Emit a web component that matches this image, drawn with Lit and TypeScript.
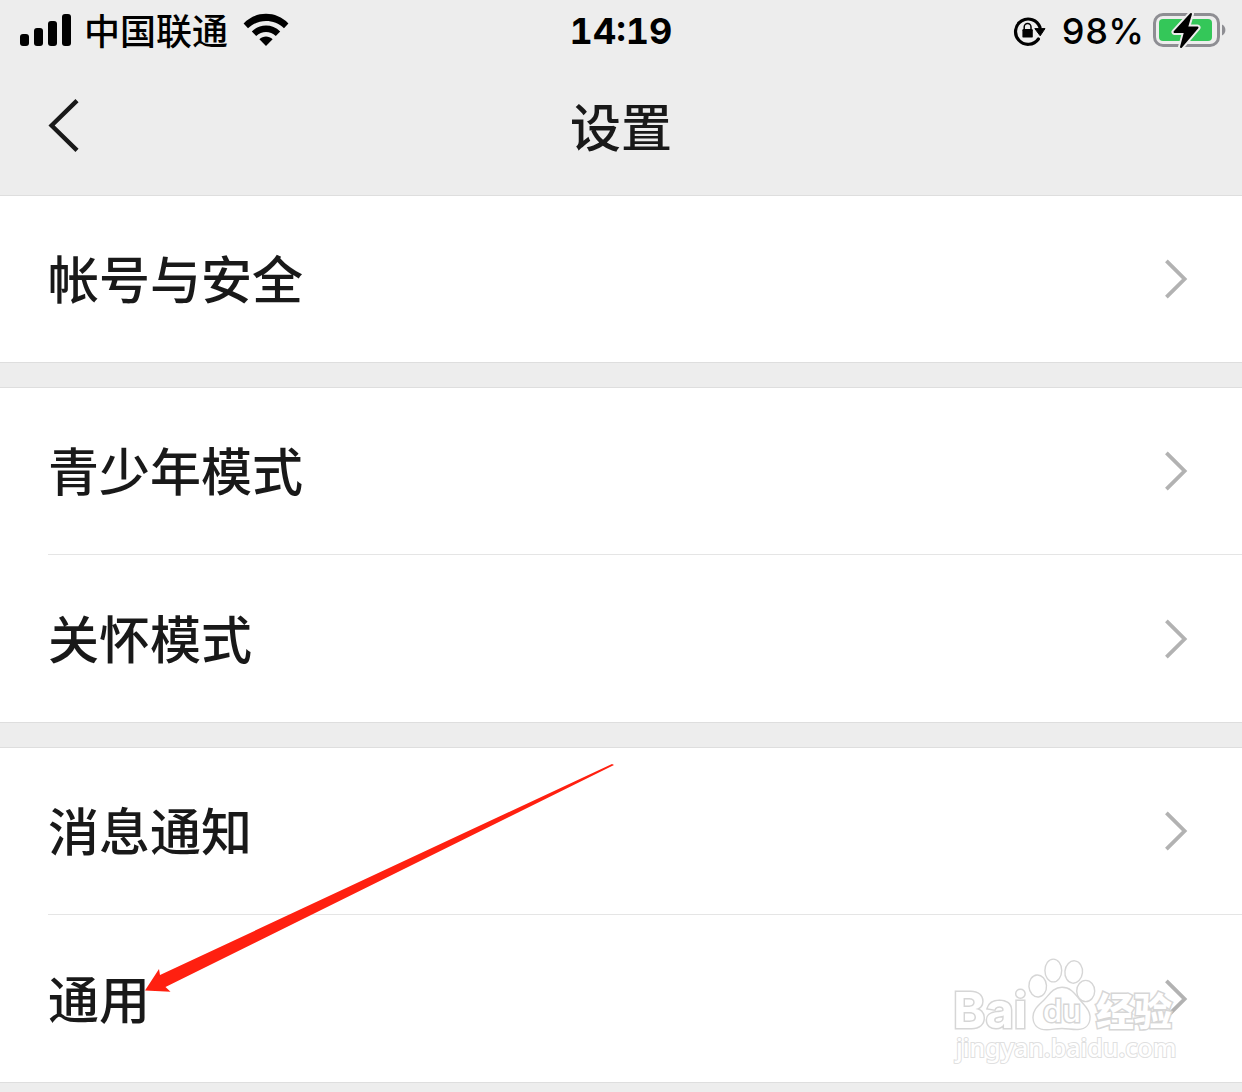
import { LitElement, html, css, svg } from "lit";
import { customElement, property } from "lit/decorators.js";

@customElement("status-bar")
class StatusBar extends LitElement {
  static styles = css`
    :host {
      display: grid;
      grid-template-columns: 1fr auto 1fr;
      align-items: center;
      height: 62px;
      padding: 0 16px;
      color: #000;
      font-size: 36px;
      line-height: 40px;
    }
    .side {
      display: flex;
      align-items: center;
    }
    .left {
      padding: 0 0 2px 4px;
    }
    .right {
      justify-content: flex-end;
    }
    .carrier {
      margin: 0 15px 0 12px;
      padding-bottom: 2px;
      font-family: "Noto Sans CJK SC", sans-serif;
      font-weight: 500;
    }
    .time {
      font-family: Inter, sans-serif;
      font-weight: 700;
      font-variant-numeric: tabular-nums;
    }
    .percent {
      margin: 0 8px 0 16px;
      font-family: Inter, sans-serif;
      font-weight: 500;
      font-variant-numeric: tabular-nums;
    }
    svg {
      display: block;
      flex: none;
    }
  `;

  render() {
    return html`
      <div class="side left">
        <svg width="52" height="34" viewBox="0 0 52 34" aria-hidden="true">
          <rect x="0" y="21" width="9" height="12" rx="3" />
          <rect x="14" y="15" width="9" height="18" rx="3" />
          <rect x="28" y="8" width="9" height="25" rx="3" />
          <rect x="42" y="1" width="9" height="32" rx="3" />
        </svg>
        <span class="carrier">中国联通</span>
        <svg width="46" height="34" viewBox="0 0 46 34" aria-hidden="true">
          <path d="M0.6 10.4C13 -2.4 33 -2.4 45.4 10.4L41 15.3C31 5.6 15 5.6 5 15.3Z" />
          <path d="M8.8 18.4C16.8 10.6 29.2 10.6 37.2 18.4L32.8 23C27.2 17.8 18.8 17.8 13.2 23Z" />
          <path d="M16.4 26.2C20.2 22.6 25.8 22.6 29.6 26.2L23 33Z" />
        </svg>
      </div>
      <span class="time">14:19</span>
      <div class="side right">
        <svg width="33" height="30" viewBox="0 0 33 30" aria-hidden="true">
          <path
            d="M25.4 23A12.6 12.6 0 1 1 27 11.4"
            fill="none"
            stroke="#000"
            stroke-width="3.2"
            stroke-linecap="round"
          />
          <path d="M21.8 12.6H32L27.2 19.8Z" stroke="#000" stroke-linejoin="round" />
          <rect x="9.4" y="13" width="10.4" height="8.600" rx="1.2" />
          <path d="M11.2 13V11a3.400 3.600 0 0 1 6.800 0v2" fill="none" stroke="#000" stroke-width="1.500" />
        </svg>
        <span class="percent">98%</span>
        <svg width="74" height="38" viewBox="0 0 74 38" aria-hidden="true">
          <rect x="2.5" y="2.5" width="64" height="31" rx="8.5" fill="none" stroke="#8e8e93" stroke-width="3" />
          <path d="M70 12.5C74.5 14.5 74.5 21.5 70 23.5Z" fill="#8e8e93" />
          <rect x="7" y="7" width="53" height="22" rx="4" fill="#34c759" />
          <path
            d="M39 2L22.500 20H33.200L29 35L45.500 15.500H35Z"
            fill="#ededed"
            stroke="#ededed"
            stroke-width="6"
            stroke-linejoin="round"
          />
          <path
            d="M39 2L22.500 20H33L29 35L45.500 15.500H35Z"
            stroke="#000"
            stroke-width="2"
            stroke-linejoin="round"
          />
        </svg>
      </div>
    `;
  }
}

@customElement("nav-header")
class NavHeader extends LitElement {
  @property() heading = "";

  static styles = css`
    :host {
      display: grid;
      grid-template-columns: 1fr auto 1fr;
      align-items: center;
      height: 133px;
      color: #191919;
    }
    .back {
      justify-self: start;
      padding: 8px 24px 16px 46px;
      border: 0;
      background: none;
      color: inherit;
      cursor: pointer;
    }
    svg {
      display: block;
    }
    .title {
      margin: 0 0 8px;
      font-size: 51px;
      font-weight: 500;
      line-height: 76px;
    }
  `;

  render() {
    return html`
      <button class="back" aria-label="返回">
        <svg width="36" height="56" viewBox="0 0 36 56" aria-hidden="true">
          <path
            d="M31 3.6L5.600 28.5L31 53.4"
            fill="none"
            stroke="currentColor"
            stroke-width="4.4"
          />
        </svg>
      </button>
      <h1 class="title">${this.heading}</h1>
    `;
  }
}

@customElement("settings-group")
class SettingsGroup extends LitElement {
  @property({ attribute: false }) items: string[] = [];

  static styles = css`
    :host {
      display: block;
      border-bottom: 1px solid #dedede;
      background: #fff;
    }
    .list {
      margin: 0;
      padding: 0;
      list-style: none;
    }
    .item {
      box-sizing: border-box;
      height: 168px;
      margin-left: 48px;
      border-top: 1px solid #e5e5e5;
    }
    .item:first-child {
      height: 167px;
      margin-left: 0;
      padding-left: 48px;
      border-color: #dedede;
    }
    .link {
      display: flex;
      align-items: center;
      justify-content: space-between;
      height: 100%;
      padding-right: 54px;
      color: #191919;
      font-size: 51px;
      font-weight: 500;
      line-height: 76px;
      text-decoration: none;
    }
    .label {
      padding-bottom: 4px;
    }
    svg {
      display: block;
      flex: none;
    }
  `;

  render() {
    return html`
      <ul class="list">
        ${this.items.map(
          (item) => html`
            <li class="item">
              <a class="link" href="#">
                <span class="label">${item}</span>
                <svg width="24" height="40" viewBox="0 0 24 40" aria-hidden="true">
                  <path d="M2.4 1.8L20.6 20L2.4 38.2" fill="none" stroke="#b2b2b2" stroke-width="3.8" />
                </svg>
              </a>
            </li>
          `
        )}
      </ul>
    `;
  }
}

@customElement("baidu-watermark")
class BaiduWatermark extends LitElement {
  static styles = css`
    :host {
      display: block;
      pointer-events: none;
    }
    svg {
      display: block;
    }
    .outline {
      fill: #fff;
      stroke: #d6d6d6;
      stroke-width: 1.4;
    }
    .word {
      fill: #fff;
      stroke: #d6d6d6;
      stroke-width: 3;
      paint-order: stroke;
      font-family: Inter, sans-serif;
      font-weight: 700;
    }
    .paw {
      font-weight: 500;
    }
    .cjk {
      font-family: "Noto Sans CJK SC", sans-serif;
      font-weight: 900;
    }
    .address {
      stroke: #e0e0e0;
      stroke-width: 2;
      font-family: "Noto Sans", sans-serif;
      font-weight: 500;
    }
  `;

  render() {
    return html`
      <svg width="230" height="112" viewBox="0 0 230 112" role="img" aria-label="Baidu 经验">
        ${svg`
          <text class="word" x="1" y="72" font-size="49">Bai</text>
          <ellipse class="outline" cx="85.7" cy="30" rx="8.8" ry="11" transform="rotate(-4 85.7 30)" />
          <ellipse class="outline" cx="101.3" cy="14.5" rx="8.4" ry="11.4" />
          <ellipse class="outline" cx="121.7" cy="16" rx="8.8" ry="11.2" transform="rotate(6 121.7 16)" />
          <ellipse class="outline" cx="133.7" cy="35" rx="9" ry="10.6" />
          <path class="outline" d="M110 31.3C101 31.3 97 39 92 44C86 50 80.500 54 81 62C81.500 70 87 74 95 73.800C101 73.500 104 72.500 110 72.500C116 72.500 120 73.800 126 73.500C134 73 138.500 68 138 60C137.500 53 132 49 128 44C123 38 119 31.300 110 31.300Z" />
          <text class="word paw" x="91" y="66" font-size="31">du</text>
          <text class="word cjk" x="144" y="69" font-size="38">经验</text>
          <text class="word address" x="4" y="101" font-size="25">jingyan.baidu.com</text>
        `}
      </svg>
    `;
  }
}

@customElement("app-root")
class AppRoot extends LitElement {
  static styles = css`
    :host {
      display: block;
      position: relative;
      min-height: 100vh;
      overflow: hidden;
      background: #ededed;
      font-family: "Noto Sans CJK SC", sans-serif;
    }
    .groups {
      display: flex;
      flex-direction: column;
      gap: 24px;
      position: relative;
    }
    .arrow {
      position: absolute;
      left: 144px;
      bottom: 88px;
      pointer-events: none;
    }
    .mark {
      position: absolute;
      right: 60px;
      bottom: 15px;
    }
  `;

  private groups = [["帐号与安全"], ["青少年模式", "关怀模式"], ["消息通知", "通用"]];

  render() {
    return html`
      <status-bar></status-bar>
      <nav-header heading="设置"></nav-header>
      <main class="groups">
        ${this.groups.map((items) => html`<settings-group .items=${items}></settings-group>`)}
        <svg class="arrow" width="472" height="233" viewBox="0 0 472 233" aria-hidden="true">
          <path
            d="M1 228.500L15 207L16 213L468 2L470 3L21.500 225L26.500 229.800Z"
            fill="#ff2010"
          />
        </svg>
        <baidu-watermark class="mark"></baidu-watermark>
      </main>
    `;
  }
}
